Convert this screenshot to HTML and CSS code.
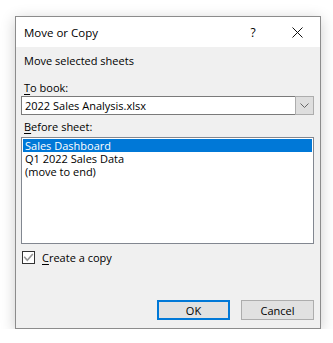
FILE: index.html
```html
<!DOCTYPE html>
<html lang="en">
<head>
  <meta charset="UTF-8" />
  <title>Move or Copy</title>
  <link rel="stylesheet" href="styles.css">
</head>
<body>
  <div class="dialog" role="dialog" aria-labelledby="dlgTitle">
    <div class="title-bar">
      <span class="title" id="dlgTitle">Move or Copy</span>
      <span class="title-help">?</span>
      <span class="title-close" aria-label="Close">
        <svg width="11" height="11" viewBox="0 0 11 11"><path d="M0.5 0.5 L10.5 10.5 M10.5 0.5 L0.5 10.5" stroke="#111" stroke-width="1" fill="none"/></svg>
      </span>
    </div>

    <div class="dlg-body">
      <div class="label first">Move selected sheets</div>

      <div class="label gap-book"><u>T</u>o book:</div>
      <div class="combo">
        <span class="combo-text">2022 Sales Analysis.xlsx</span>
        <span class="combo-btn">
          <svg width="9" height="5" viewBox="0 0 9 5"><path d="M0.5 0.5 L4.5 4.5 L8.5 0.5" stroke="#666" stroke-width="1" fill="none"/></svg>
        </span>
      </div>

      <div class="label gap-sheet"><u>B</u>efore sheet:</div>
      <div class="list" role="listbox">
        <div class="list-item selected">Sales Dashboard</div>
        <div class="list-item">Q1 2022 Sales Data</div>
        <div class="list-item">(move to end)</div>
      </div>

      <label class="check-row">
        <span class="check-box">
          <svg width="11" height="9" viewBox="0 0 11 9"><path d="M1.2 3.8 L4.3 7.3 L9.8 1" stroke="#959595" stroke-width="1.6" fill="none"/></svg>
        </span>
        <span><u>C</u>reate a copy</span>
      </label>

      <div class="buttons">
        <button class="btn btn-default" type="button">OK</button>
        <button class="btn" type="button">Cancel</button>
      </div>
    </div>
  </div>
</body>
</html>
```

FILE: styles.css
```css
/* Base */
*, *::before, *::after {
  box-sizing: border-box;
}

html, body {
  margin: 0;
  padding: 0;
  background: #fff;
  font-family: "Open Sans", "Noto Sans", sans-serif;
  font-size: 11px;
  color: #000;
}

/* Janela */
.dialog {
  margin: 16px 0 0 15px;
  width: 306px;
  height: 313px;
  background: #f0f0f0;
  border: 1px solid #8c8c8c;
  box-shadow: 0 3px 14px rgba(0, 0, 0, 0.2);
  display: flex;
  flex-direction: column;
}

.title-bar {
  height: 30px;
  background: #fff;
  display: flex;
  align-items: center;
  padding-left: 8px;
}
.title { flex: 1; font-size: 11.5px; }
.title-help { width: 20px; text-align: center; margin-right: 29px; font-size: 12px; }
.title-close { width: 11px; height: 11px; display: flex; margin-right: 17px; }

.dlg-body {
  flex: 1;
  padding: 0 6px;
  display: flex;
  flex-direction: column;
}

.label { line-height: 16px; padding-left: 2px; }
.label u, .check-row u { text-decoration-thickness: 1px; text-underline-offset: 2px; }
.first { margin-top: 6px; }
.gap-book { margin-top: 11px; }
.gap-sheet { margin-top: 4px; }

/* Combo */
.combo {
  height: 19px;
  margin-left: -1px;
  background: #fff;
  border: 1px solid #7a7a7a;
  display: flex;
  align-items: stretch;
}
.combo-text { flex: 1; padding-left: 3px; line-height: 17px; }
.combo-btn {
  width: 19px;
  margin: -1px -1px -1px 0;
  background: #dedede;
  border: 1px solid #adadad;
  display: flex;
  align-items: center;
  justify-content: center;
}

/* Lista */
.list {
  margin-top: 2px;
  margin-left: -1px;
  height: 107px;
  background: #fff;
  border: 1px solid #828790;
  padding: 1px;
}
.list-item { height: 13px; line-height: 13px; padding-left: 2px; white-space: nowrap; }
.list-item.selected { background: #0078d7; color: #fff; }

/* Checkbox */
.check-row {
  margin-top: 7px;
  display: flex;
  align-items: center;
  gap: 7px;
  line-height: 13px;
}
.check-box {
  width: 13px;
  height: 13px;
  border: 1px solid #333;
  background: #fff;
  display: flex;
  align-items: center;
  justify-content: center;
}

/* Botoes */
.buttons {
  margin-top: 36px;
  display: flex;
  justify-content: flex-end;
  gap: 11px;
}
.btn {
  width: 73px;
  height: 20px;
  background: #e1e1e1;
  border: 1px solid #adadad;
  font-family: inherit;
  font-size: 11px;
  padding: 0;
  color: #000;
}
.btn-default { border: 2px solid #0078d7; }
```
